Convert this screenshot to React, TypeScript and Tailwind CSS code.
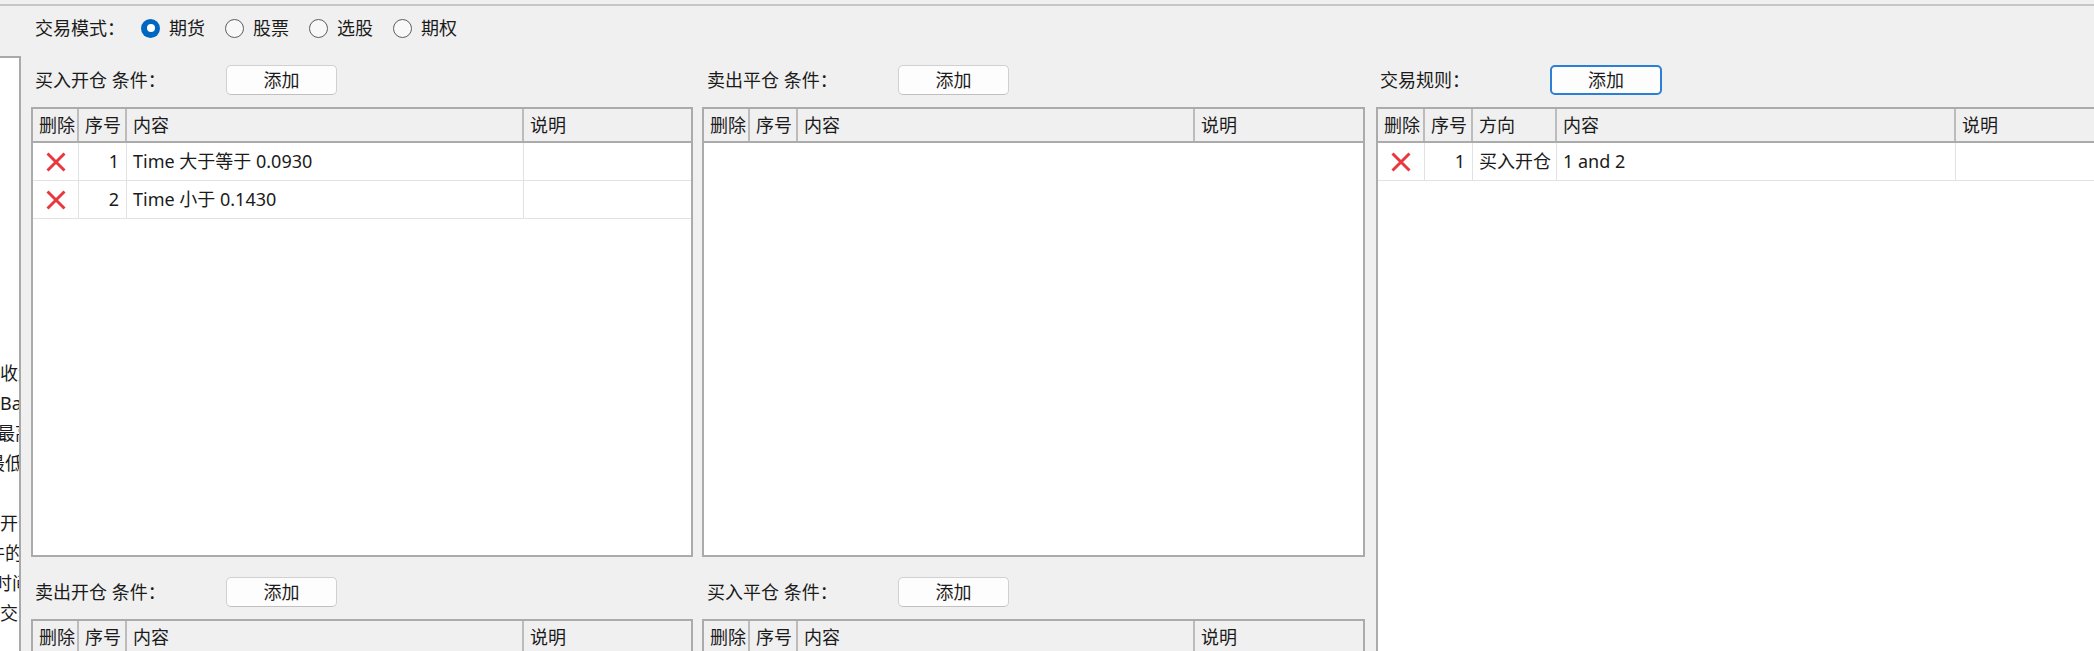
import React from 'react';

type Col = { title: string; w: string };
type Cell = { kind: 'x' } | { kind: 'num'; v: number } | { kind: 'text'; v: string };

const DEL = { kind: 'x' } as const;

function XMark() {
  return (
    <svg width="22" height="22" viewBox="0 0 22 22">
      <path d="M2.5 2.5 L19.5 19.5 M19.5 2.5 L2.5 19.5" stroke="#e8383d" strokeWidth="3" />
    </svg>
  );
}

function Radio({ checked, label }: { checked?: boolean; label: string }) {
  return (
    <div className="flex items-center gap-[9px] mr-[20px]">
      {checked ? (
        <span className="w-[19px] h-[19px] rounded-full bg-[#0067c0] flex items-center justify-center">
          <span className="w-[8px] h-[8px] rounded-full bg-white" />
        </span>
      ) : (
        <span className="w-[19px] h-[19px] rounded-full border border-[#5d5d5d] bg-[#f8f8f8]" />
      )}
      <span>{label}</span>
    </div>
  );
}

function AddButton({ focused }: { focused?: boolean }) {
  return (
    <button
      className={
        focused
          ? 'w-[112px] h-[30px] rounded-[5px] border-2 border-[#2b7fd4] bg-[#fdfdfd] flex items-center justify-center'
          : 'w-[111px] h-[30px] rounded-[5px] border border-[#d0d0d0] border-b-[#c0c0c0] bg-[#fdfdfd] flex items-center justify-center'
      }
    >
      添加
    </button>
  );
}

function SectionHead({ label, labelW, pl, focused }: { label: string; labelW: string; pl: string; focused?: boolean }) {
  return (
    <div className="flex items-center h-[30px]">
      <div className={`${labelW} ${pl} shrink-0`}>{label}</div>
      <AddButton focused={focused} />
    </div>
  );
}

function Table({ cols, rows, className }: { cols: Col[]; rows: Cell[][]; className: string }) {
  return (
    <div className={`border-2 border-[#ababab] bg-white overflow-hidden ${className}`}>
      <div className="flex h-[34px] bg-[#f0f0f0] border-b-2 border-[#ababab]">
        {cols.map((c, i) => (
          <div
            key={i}
            className={`${c.w} flex items-center px-[6px] whitespace-nowrap ${i < cols.length - 1 ? 'border-r-2 border-[#bcbcbc]' : ''}`}
          >
            {c.title}
          </div>
        ))}
      </div>
      {rows.map((r, ri) => (
        <div key={ri} className="flex h-[38px] border-b border-[#e2e2e2]">
          {r.map((cell, ci) => (
            <div
              key={ci}
              className={`${cols[ci].w} flex items-center whitespace-nowrap ${ci < cols.length - 1 ? 'border-r border-[#e2e2e2]' : ''} ${
                cell.kind === 'x' ? 'justify-center' : cell.kind === 'num' ? 'justify-end pr-[7px]' : 'px-[6px]'
              }`}
            >
              {cell.kind === 'x' ? <XMark /> : cell.v}
            </div>
          ))}
        </div>
      ))}
    </div>
  );
}

const condCols: Col[] = [
  { title: '删除', w: 'w-[46px] shrink-0' },
  { title: '序号', w: 'w-[48px] shrink-0' },
  { title: '内容', w: 'w-[397px] shrink-0' },
  { title: '说明', w: 'flex-1' },
];

const ruleCols: Col[] = [
  { title: '删除', w: 'w-[47px] shrink-0' },
  { title: '序号', w: 'w-[48px] shrink-0' },
  { title: '方向', w: 'w-[84px] shrink-0' },
  { title: '内容', w: 'w-[399px] shrink-0' },
  { title: '说明', w: 'w-[300px] shrink-0' },
];

const buyOpen: Cell[][] = [
  [DEL, { kind: 'num', v: 1 }, { kind: 'text', v: 'Time 大于等于 0.0930' }, { kind: 'text', v: '' }],
  [DEL, { kind: 'num', v: 2 }, { kind: 'text', v: 'Time 小于 0.1430' }, { kind: 'text', v: '' }],
];

const rules: Cell[][] = [
  [DEL, { kind: 'num', v: 1 }, { kind: 'text', v: '买入开仓' }, { kind: 'text', v: '1 and 2' }, { kind: 'text', v: '' }],
];

// side panel is scrolled: only the tail of each line shows
const sideLines: { t: string; ml: string }[] = [
  { t: '接收盘', ml: '-ml-[18px]' },
  { t: 'Bar', ml: 'ml-0' },
  { t: '最高价', ml: '-ml-[3px]' },
  { t: '最低价', ml: '-ml-[13px]' },
  { t: '', ml: 'ml-0' },
  { t: '开仓', ml: 'ml-0' },
  { t: '件的', ml: '-ml-[13px]' },
  { t: '时间', ml: '-ml-[6px]' },
  { t: '交易', ml: 'ml-0' },
];

export default function App() {
  return (
    <div className="w-[2094px] h-[651px] overflow-hidden bg-[#f0f0f0] text-[18px] text-[#1b1b1b] font-['Noto_Sans','Noto_Sans_CJK_SC',sans-serif] flex flex-col">
      <div className="h-[4px] shrink-0" />
      <div className="h-[2px] shrink-0 bg-[#c6c6c6]" />

      <div className="flex flex-1 min-h-0">
        {/* Side panel */}
        <div className="w-[21px] shrink-0 pt-[50px] flex flex-col">
          <div className="flex-1 bg-white border-t-2 border-r-2 border-[#a9a9a9] overflow-hidden pt-[300px]">
            {sideLines.map((l, i) => (
              <div key={i} className={`h-[30px] leading-[30px] whitespace-nowrap ${l.ml}`}>
                {l.t}
              </div>
            ))}
          </div>
        </div>

        {/* Main */}
        <div className="flex-1 pl-[10px] flex flex-col">
          <div className="h-[44px] flex items-center pl-[4px] shrink-0">
            <span className="mr-[16px]">交易模式：</span>
            <Radio checked label="期货" />
            <Radio label="股票" />
            <Radio label="选股" />
            <Radio label="期权" />
          </div>

          <div className="flex pt-[15px]">
            <div className="w-[662px] shrink-0 flex flex-col">
              <SectionHead label="买入开仓 条件：" labelW="w-[195px]" pl="pl-[4px]" />
              <Table cols={condCols} rows={buyOpen} className="mt-[12px] h-[450px]" />
              <div className="mt-[20px]">
                <SectionHead label="卖出开仓 条件：" labelW="w-[195px]" pl="pl-[4px]" />
              </div>
              <Table cols={condCols} rows={[]} className="mt-[12px] h-[200px]" />
            </div>

            <div className="w-[663px] shrink-0 ml-[9px] flex flex-col">
              <SectionHead label="卖出平仓 条件：" labelW="w-[196px]" pl="pl-[5px]" />
              <Table cols={condCols} rows={[]} className="mt-[12px] h-[450px]" />
              <div className="mt-[20px]">
                <SectionHead label="买入平仓 条件：" labelW="w-[196px]" pl="pl-[5px]" />
              </div>
              <Table cols={condCols} rows={[]} className="mt-[12px] h-[200px]" />
            </div>

            <div className="w-[900px] shrink-0 ml-[11px] flex flex-col">
              <SectionHead label="交易规则：" labelW="w-[174px]" pl="pl-[4px]" focused />
              <Table cols={ruleCols} rows={rules} className="mt-[12px] h-[700px]" />
            </div>
          </div>
        </div>
      </div>
    </div>
  );
}
